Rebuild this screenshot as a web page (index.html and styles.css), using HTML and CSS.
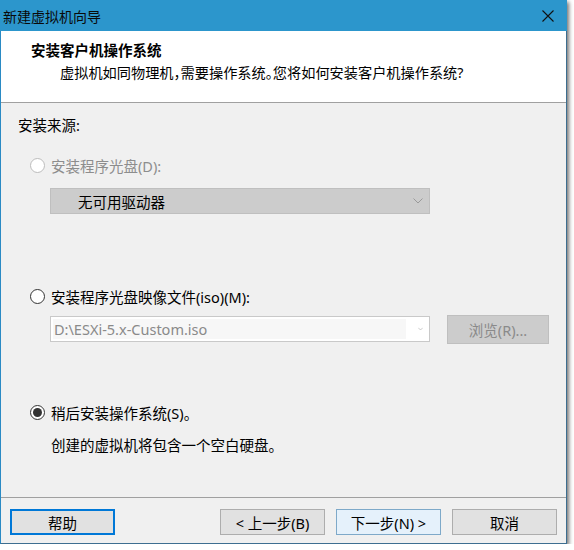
FILE: index.html
```html
<!DOCTYPE html>
<html lang="zh-CN">
<head>
<meta charset="utf-8">
<link rel="stylesheet" href="styles.css">
</head>
<body>
<div class="window">
  <div class="titlebar">
    <span class="title">新建虚拟机向导</span>
    <svg class="close" width="12" height="12" viewBox="0 0 12 12"><path d="M0.5 0.5 L11.5 11.5 M11.5 0.5 L0.5 11.5" stroke="#111" stroke-width="1.1" fill="none"/></svg>
  </div>
  <div class="header">
    <div class="h-title">安装客户机操作系统</div>
    <div class="h-sub">虚拟机如同物理机<span class="punct">，</span>需要操作系统<span class="punct">。</span>您将如何安装客户机操作系统?</div>
  </div>
  <div class="content">
    <div class="label">安装来源:</div>
    <div class="radio-row r1 disabled"><span class="radio"></span><span>安装程序光盘(D):</span></div>
    <div class="select disabled-select"><span>无可用驱动器</span>
      <svg class="chev" width="10" height="6" viewBox="0 0 10 6"><path d="M0.5 0.5 L5 5 L9.5 0.5" stroke="#9a9a9a" fill="none"/></svg></div>
    <div class="radio-row r2"><span class="radio"></span><span>安装程序光盘映像文件(iso)(M):</span></div>
    <div class="iso-row">
      <div class="combo"><div class="combo-text">D:\ESXi-5.x-Custom.iso</div>
        <svg class="chev" width="10" height="6" viewBox="0 0 10 6"><path d="M0.5 0.5 L5 5 L9.5 0.5" stroke="#9a9a9a" fill="none"/></svg></div>
      <div class="browse">浏览(R)...</div>
    </div>
    <div class="radio-row r3"><span class="radio checked"></span><span>稍后安装操作系统(S)。</span></div>
    <div class="desc">创建的虚拟机将包含一个空白硬盘。</div>
  </div>
  <div class="footer">
    <div class="btn help">帮助</div>
    <div class="spacer"></div>
    <div class="btn">&lt; 上一步(B)</div>
    <div class="btn next">下一步(N) &gt;</div>
    <div class="btn">取消</div>
  </div>
</div>
</body>
</html>
```
FILE: styles.css
```css
html, body {
  margin: 0;
  padding: 0;
  background: #ffffff;
}
body {
  font-family: "Noto Sans", "Noto Sans CJK SC", sans-serif;
  font-size: 14.5px;
  color: #000;
}
.window {
  box-sizing: border-box;
  width: 567px;
  height: 544px;
  border: 1px solid #2a8ac4;
  border-right-color: #3d6e90;
  border-bottom-color: #3d6e90;
  background: #f0f0f0;
  display: flex;
  flex-direction: column;
  box-shadow: 2px 2px 4px rgba(0, 0, 0, 0.55);
}
.titlebar {
  height: 30px;
  background: #2c96cc;
  display: flex;
  align-items: center;
  padding-left: 3px;
  padding-right: 13px;
  margin: -1px -1px 0 -1px;
  padding-top: 1px;
}
.title {
  font-size: 14px;
  flex: 1;
  color: #0a0a0a;
}
.close {
  display: block;
}
.header {
  box-sizing: border-box;
  height: 72px;
  background: #fff;
  border-bottom: 1px solid #a0a0a0;
  padding-top: 9px;
}
.h-title {
  font-weight: bold;
  padding-left: 30px;
  line-height: 20px;
  font-size: 14.5px;
}
.h-sub {
  padding-left: 59px;
  line-height: 20px;
  margin-top: 3px;
  font-size: 14.2px;
}
.punct {
  font-feature-settings: "halt";
}
.content {
  flex: 1;
  padding: 12px 0 0 17px;
}
.label {
  line-height: 20px;
}
.radio-row {
  display: flex;
  align-items: center;
  height: 20px;
  margin-left: 12px;
}
.radio-row .radio {
  box-sizing: border-box;
  width: 15px;
  height: 15px;
  border: 1px solid #333;
  border-radius: 50%;
  background: #fff;
  margin-right: 6px;
  display: flex;
  align-items: center;
  justify-content: center;
}
.radio.checked::after {
  content: "";
  width: 9px;
  height: 9px;
  border-radius: 50%;
  background: #333;
}
.radio-row.disabled {
  color: #8d8d8d;
}
.radio-row.disabled .radio {
  border-color: #bcbcbc;
}
.r1 { margin-top: 20px; }
.r2 { margin-top: 72px; }
.r3 { margin-top: 58px; }
.select {
  box-sizing: border-box;
  margin-top: 13px;
  margin-left: 32px;
  width: 380px;
  height: 26px;
  display: flex;
  align-items: center;
  padding-left: 27px;
  padding-right: 6px;
}
.select span { flex: 1; }
.disabled-select {
  background: #cccccc;
  border: 1px solid #bfbfbf;
}
.iso-row {
  display: flex;
  align-items: flex-start;
  margin-top: 9px;
  margin-left: 32px;
}
.combo {
  box-sizing: border-box;
  margin-top: 1px;
  width: 380px;
  height: 26px;
  background: #fff;
  border: 1px solid #c9c9c9;
  display: flex;
  align-items: center;
  padding: 2px 6px 2px 2px;
}
.combo-text {
  flex: none;
  width: 353px;
  height: 100%;
  background: #f7f7f7;
  color: #8a8a8a;
  padding-left: 1px;
  display: flex;
  align-items: center;
  box-sizing: border-box;
  margin-right: 12px;
}
.browse {
  box-sizing: border-box;
  margin-left: 17px;
  width: 102px;
  height: 29px;
  background: #cccccc;
  border: 1px solid #bfbfbf;
  color: #8a8a8a;
  display: flex;
  align-items: center;
  justify-content: center;
}
.desc {
  margin-top: 13px;
  margin-left: 33px;
  line-height: 20px;
}
.footer {
  box-sizing: border-box;
  height: 46px;
  border-top: 1px solid #a0a0a0;
  display: flex;
  align-items: flex-start;
  padding: 11px 9px 0 9px;
  gap: 11px;
}
.spacer { flex: 1; }
.btn {
  box-sizing: border-box;
  width: 105px;
  height: 26px;
  background: #e1e1e1;
  border: 1px solid #adadad;
  display: flex;
  align-items: center;
  justify-content: center;
}
.btn.help {
  border: 2px solid #0078d7;
}
.btn.next {
  background: #e5f1fb;
  border-color: #7ea9c9;
}
```
